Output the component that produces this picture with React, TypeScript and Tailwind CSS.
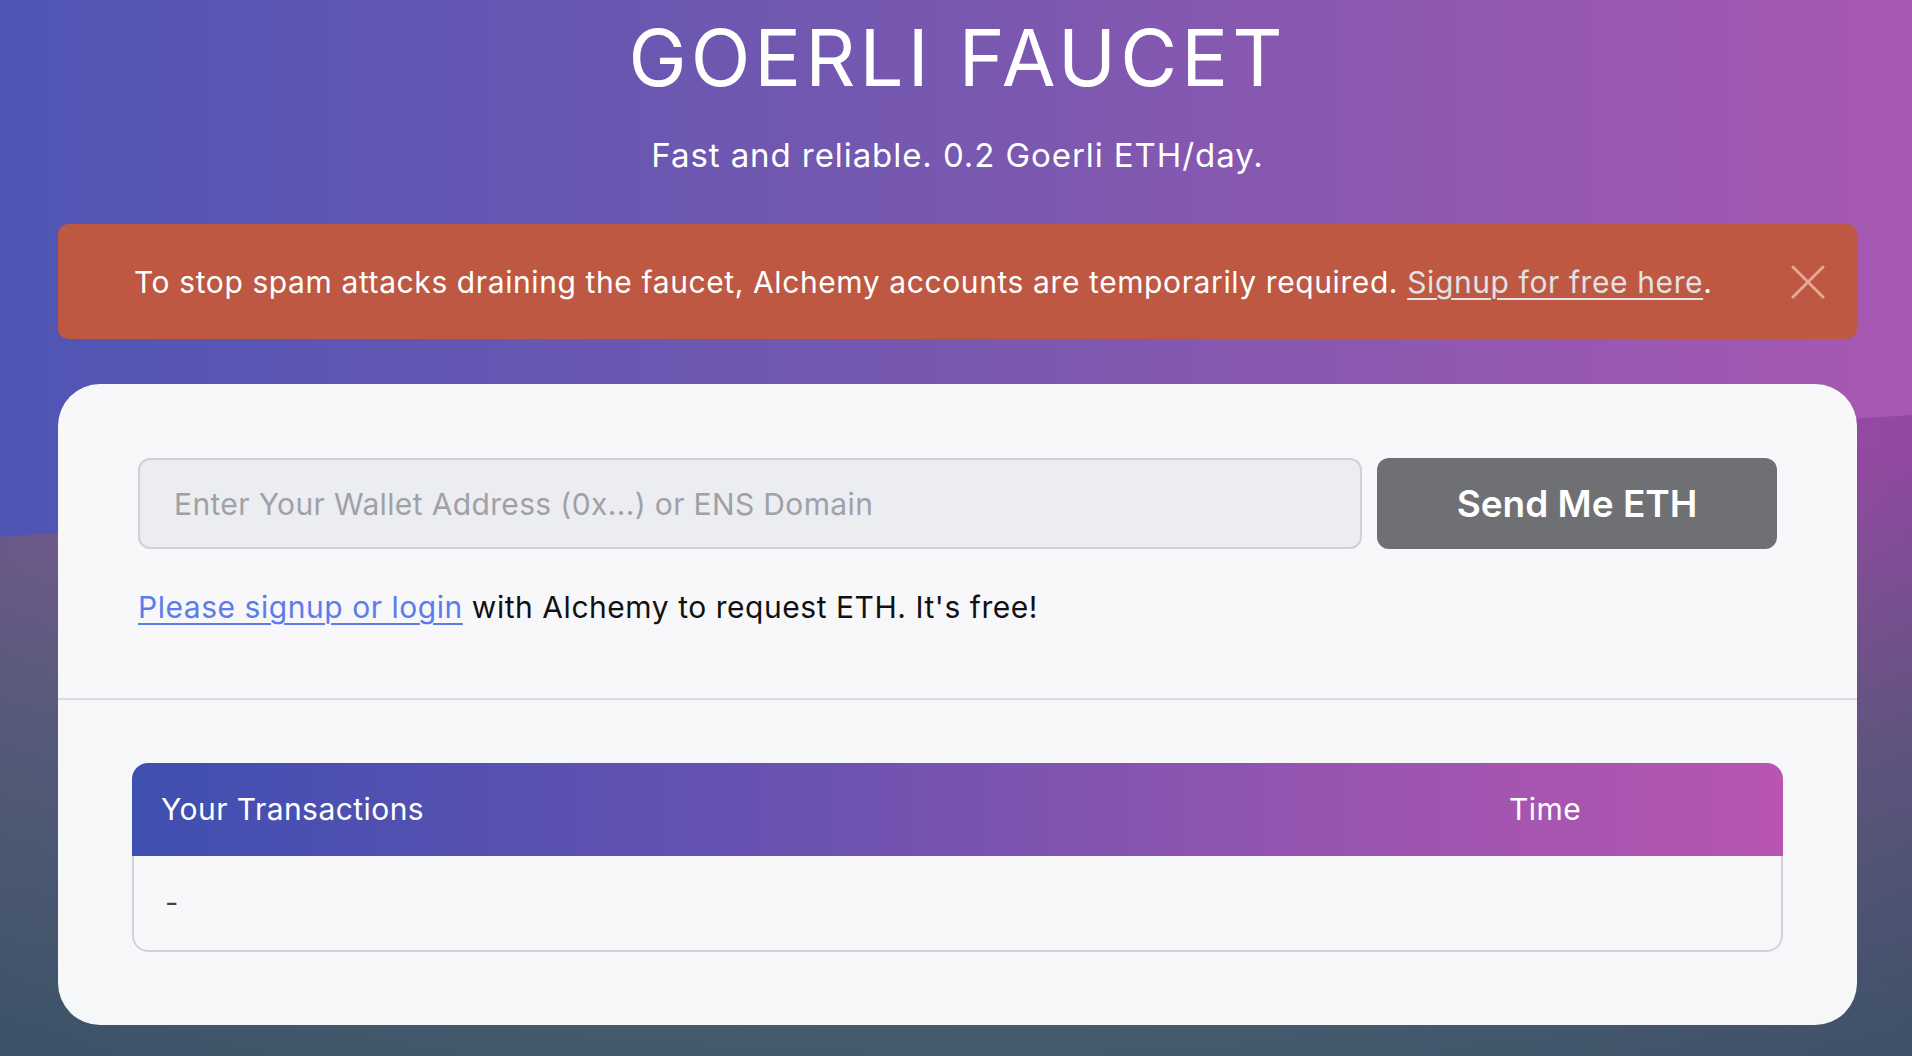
import { useState } from "react";

export default function App() {
  const [address, setAddress] = useState("");
  const [showAlert, setShowAlert] = useState(true);

  const transactions: { hash: string; time: string }[] = [];

  return (
    <div className="relative min-h-screen overflow-hidden font-[Inter,'Noto_Sans',sans-serif]">
      {/* Backdrop: upper gradient + slanted lower band */}
      <div className="absolute inset-0 [background-image:radial-gradient(ellipse_55%_45%_at_50%_85%,rgba(175,180,200,0.35),transparent_100%),linear-gradient(90deg,#4f55b4_0%,#7858b0_50%,#a858b2_100%)]" />
      <div className="absolute inset-0 [clip-path:polygon(0_537px,100%_415px,100%_100%,0_100%)] [background-image:radial-gradient(ellipse_80%_75%_at_50%_40%,transparent_60%,rgba(40,50,85,0.35)_100%),linear-gradient(180deg,rgba(66,100,108,0)_42%,rgba(66,100,108,0.55)_70%,rgba(66,100,108,0.9)_100%),linear-gradient(90deg,#765890_0%,#8a4f9c_60%,#9448a2_100%)]" />

      <div className="relative flex flex-col pl-[58px] pr-[55px] pb-[32px]">
        {/* Header */}
        <h1 className="pt-[19px] text-center text-[78px] leading-[78px] font-normal tracking-[0.052em] text-white">
          GOERLI FAUCET
        </h1>
        <p className="mt-[42px] text-center text-[33px] leading-[32px] tracking-[0.028em] text-white">
          Fast and reliable. 0.2 Goerli ETH/day.
        </p>

        {/* Alert */}
        {showAlert ? (
          <div className="mt-[53px] flex h-[115px] items-center justify-between rounded-[10px] bg-[#be5842] pl-[76px] pr-[32px]">
            <span className="text-[30px] leading-[30px] tracking-[0.02em] text-white">
              To stop spam attacks draining the faucet, Alchemy accounts are temporarily required.{" "}
              <a href="#" className="text-[#e2e2e2] underline underline-offset-[5px] decoration-2">
                Signup for free here
              </a>
              .
            </span>
            <button onClick={() => setShowAlert(false)} className="flex h-[34px] w-[34px] items-center justify-center">
              <svg width="34" height="34" viewBox="0 0 34 34" fill="none">
                <path d="M2 2L32 32M32 2L2 32" stroke="#e8a796" strokeWidth="3" strokeLinecap="round" />
              </svg>
            </button>
          </div>
        ) : (
          <div className="mt-[53px] h-[115px]" />
        )}

        {/* Main card */}
        <div className="mt-[45px] overflow-hidden rounded-[42px] bg-[linear-gradient(180deg,#f8f8fb,#f6f7f8)]">
          <div className="px-20 pt-[74px] pb-[76px]">
            <div className="flex gap-[15px]">
              <input
                value={address}
                onChange={(e) => setAddress(e.target.value)}
                placeholder="Enter Your Wallet Address (0x...) or ENS Domain"
                className="h-[91px] flex-1 rounded-[12px] border-2 border-[#d0d1d5] bg-[#ecedf0] px-[34px] text-[30px] tracking-[0.012em] text-[#333] outline-none placeholder:text-[#a0a1a8]"
              />
              <button className="h-[91px] w-[400px] rounded-[12px] bg-[#6f7074] text-[37px] font-semibold text-white">
                Send Me ETH
              </button>
            </div>
            <p className="mt-[43px] text-[30px] leading-[30px] tracking-[0.018em] text-[#111]">
              <a href="#" className="text-[#5b7ce9] underline underline-offset-[5px] decoration-2">
                Please signup or login
              </a>{" "}
              with Alchemy to request ETH. It's free!
            </p>
          </div>

          <div className="border-t-2 border-[#dcdde1] px-[74px] pt-[63px] pb-[73px]">
            <div className="overflow-hidden rounded-[16px]">
              <div className="grid h-[93px] grid-cols-[1fr_303px] items-center bg-[linear-gradient(90deg,#3f4fb0_0%,#6a52b0_40%,#9a55b0_75%,#b855b0_100%)] text-[30px] tracking-[0.015em] text-white">
                <span className="pl-[29px]">Your Transactions</span>
                <span className="pl-[29px]">Time</span>
              </div>
              <div className="flex h-[96px] items-center rounded-b-[16px] border-2 border-t-0 border-[#d0d2d8] bg-[#f8f8fa] pl-[31px] text-[29px] text-[#444]">
                {transactions.length === 0 ? "-" : null}
                {transactions.map((tx) => (
                  <div key={tx.hash} className="grid grid-cols-[1fr_303px]">
                    <span>{tx.hash}</span>
                    <span>{tx.time}</span>
                  </div>
                ))}
              </div>
            </div>
          </div>
        </div>
      </div>
    </div>
  );
}
